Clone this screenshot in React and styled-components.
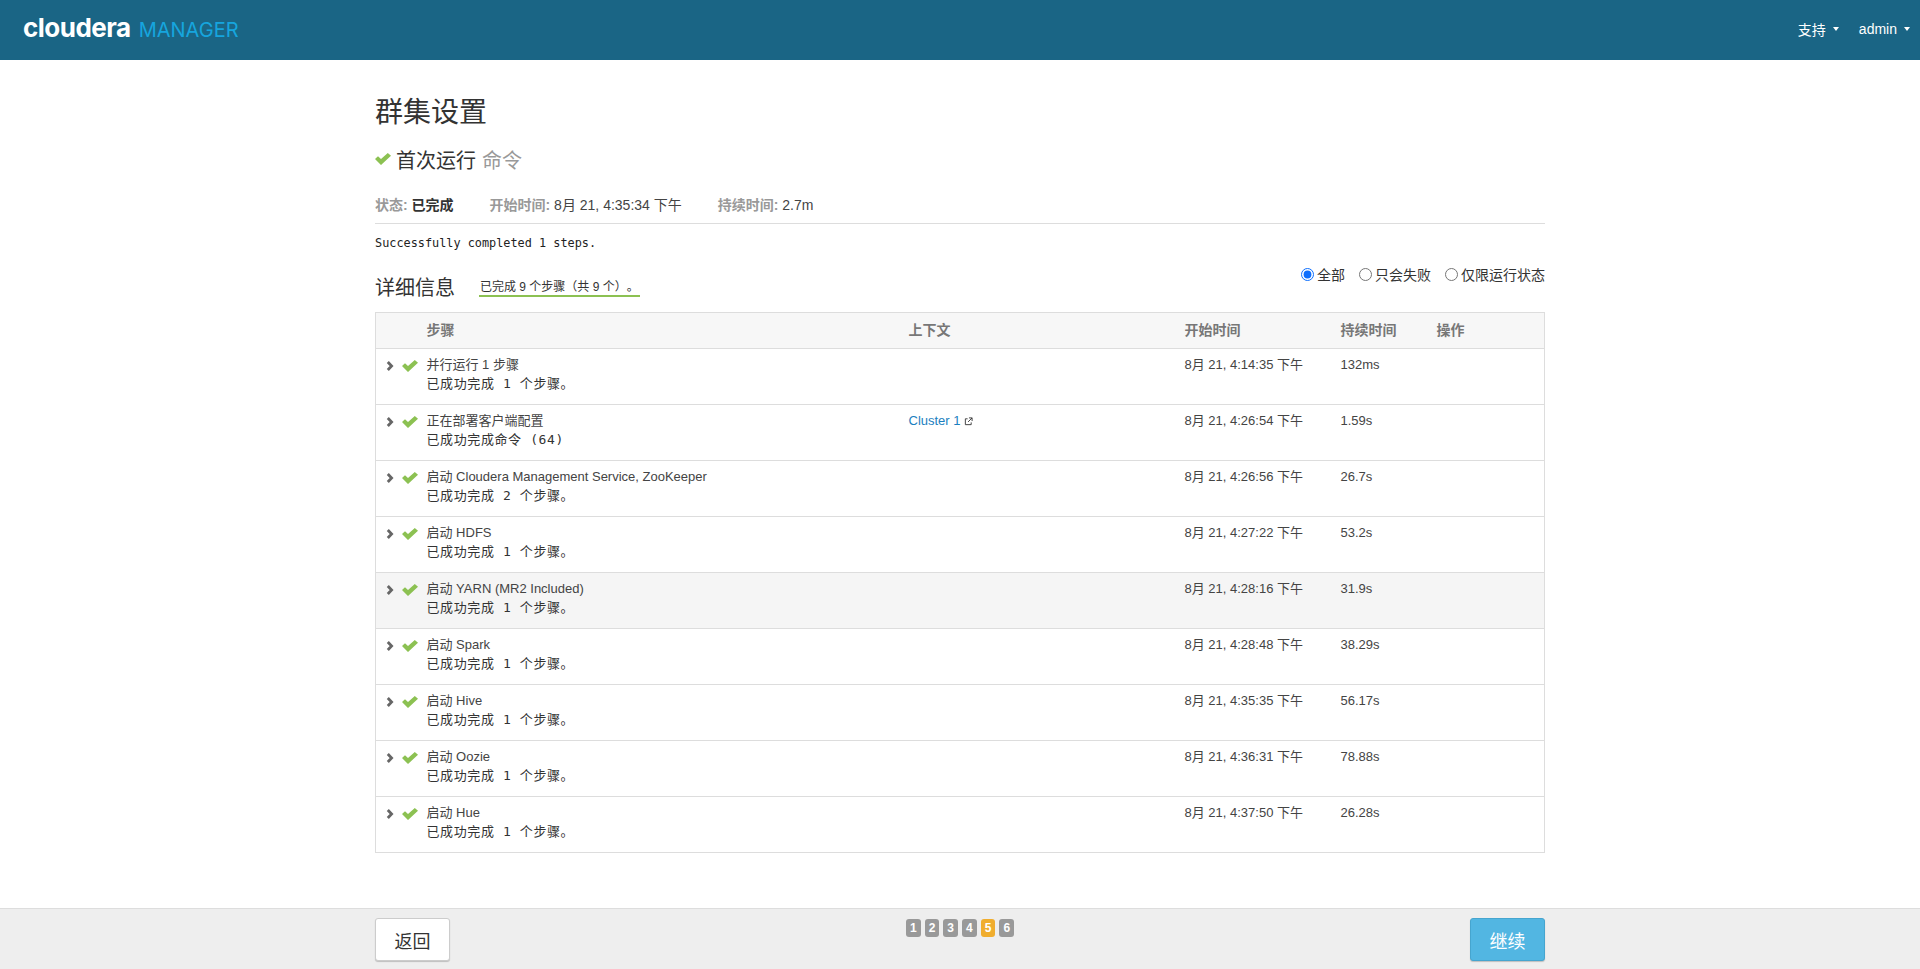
import React from 'react';
import styled, { createGlobalStyle } from 'styled-components';

const CJK = '"Liberation Sans", "Noto Sans CJK SC", sans-serif';
const MONO = '"DejaVu Sans Mono", "Noto Sans CJK SC", monospace';

const GlobalStyle = createGlobalStyle`
  html, body {
    margin: 0;
    padding: 0;
    background: #fff;
    font-family: ${CJK};
    font-size: 13px;
    color: #333;
    text-spacing-trim: space-all;
  }
  * { box-sizing: border-box; }
`;

const Page = styled.div`
  height: 969px;
  display: flex;
  flex-direction: column;
  overflow: hidden;
`;

const Navbar = styled.div`
  height: 60px;
  flex: none;
  background: #1a6585;
  display: flex;
  align-items: center;
  justify-content: space-between;
  padding: 0 10px 0 23px;
`;

const Logo = styled.div`
  display: flex;
  align-items: baseline;
  margin-top: -6px;
`;

const LogoMain = styled.span`
  font-family: Inter, sans-serif;
  font-weight: 700;
  font-size: 26px;
  letter-spacing: -0.5px;
  color: #fff;
`;

const LogoSub = styled.span`
  font-family: Inter, sans-serif;
  font-size: 20px;
  color: #16a5de;
  margin-left: 8px;
`;

const NavMenu = styled.div`
  display: flex;
  gap: 20px;
  margin-top: -3px;
`;

const NavItem = styled.span`
  display: flex;
  align-items: center;
  gap: 7px;
  font-size: 14px;
  color: #fff;
`;

const Caret = styled.i`
  width: 0;
  height: 0;
  border-left: 3.5px solid transparent;
  border-right: 3.5px solid transparent;
  border-top: 4px solid #fff;
`;

const Main = styled.div`
  flex: 1;
  width: 1170px;
  margin: 0 auto;
`;

const Title = styled.h1`
  margin: 0;
  padding-top: 35px;
  height: 75px;
  font-size: 28px;
  line-height: 36px;
  font-weight: 400;
  color: #333;
`;

const Subtitle = styled.div`
  display: flex;
  align-items: center;
  height: 48px;
  font-size: 20px;
  color: #333;
`;

const SubtitleCheck = styled.svg`
  width: 16px;
  height: 12px;
  margin-right: 5px;
`;

const Muted = styled.span`
  color: #999;
  margin-left: 6px;
`;

const StatusRow = styled.div`
  display: flex;
  gap: 36px;
  align-items: center;
  height: 41px;
  padding-top: 1px;
  font-size: 14px;
  border-bottom: 1px solid #ddd;
  color: #444;
`;

const StatusLabel = styled.b`
  color: #999;
  font-weight: 700;
`;

const StatusValue = styled.b`
  color: #333;
`;

const Message = styled.div`
  font-family: ${MONO};
  font-size: 11.85px;
  line-height: 18px;
  padding-top: 10px;
  color: #222;
`;

const DetailBar = styled.div`
  display: flex;
  align-items: flex-start;
  justify-content: space-between;
  height: 60px;
  padding-top: 8px;
`;

const DetailLeft = styled.div`
  display: flex;
  align-items: flex-start;
`;

const DetailTitle = styled.div`
  font-size: 20px;
  line-height: 28px;
  margin-top: 14px;
  color: #333;
`;

const Progress = styled.div`
  margin: 15px 0 0 24px;
  padding: 4px 1px 0 1px;
  width: 161px;
  height: 22px;
  font-size: 12px;
  line-height: 16px;
  border-bottom: 2px solid #8cc152;
  white-space: nowrap;
`;

const Filters = styled.div`
  display: flex;
  gap: 14px;
  font-size: 14px;
  color: #333;
  margin-top: 4px;
`;

const FilterLabel = styled.label`
  display: flex;
  align-items: center;
  gap: 3px;
`;

const Radio = styled.input`
  margin: 0;
  width: 13px;
  height: 13px;
  accent-color: #0d6efd;
`;

const StepsTable = styled.table`
  width: 100%;
  border-collapse: collapse;
  table-layout: fixed;
  border: 1px solid #ddd;
`;

const HeadCell = styled.th`
  height: 36px;
  text-align: left;
  background: #f7f7f7;
  border-bottom: 1px solid #ddd;
  font-size: 14px;
  font-weight: 700;
  color: #777;
  padding: 0 0 3px;
  width: ${(p) => p.$w}px;
`;

const Row = styled.tr`
  height: 56px;
  background: ${(p) => (p.$hover ? '#f5f5f5' : '#fff')};
  border-bottom: 1px solid #ddd;
`;

const Cell = styled.td`
  vertical-align: top;
  padding: 7px 0 0;
  font-size: 13px;
  line-height: 18px;
  color: #444;
`;

const IconCell = styled(Cell)`
  padding: 8px 0 0 10px;
`;

const Icons = styled.div`
  display: flex;
  align-items: center;
  gap: 8px;
  height: 18px;
`;

const IconSvg = styled.svg`
  display: block;
  flex: none;
`;

const StepName = styled.div`
  color: #444;
`;

const StepMessage = styled.div`
  font-family: ${MONO};
  font-size: 13px;
  letter-spacing: 0.6px;
  line-height: 20px;
  color: #333;
`;

const StepLink = styled.a`
  display: inline-flex;
  align-items: center;
  gap: 3px;
  color: #1b80c0;
  text-decoration: none;
`;

const Footer = styled.div`
  height: 61px;
  flex: none;
  background: #eee;
  border-top: 1px solid #ddd;
`;

const FooterInner = styled.div`
  width: 1170px;
  height: 100%;
  margin: 0 auto;
  display: flex;
  justify-content: space-between;
  padding-top: 9px;
`;

const Button = styled.button`
  width: 75px;
  height: 43px;
  font-family: ${CJK};
  font-size: 18px;
  border-radius: 3px;
  border: 1px solid ${(p) => (p.$primary ? '#46a5cf' : '#ccc')};
  background: ${(p) => (p.$primary ? '#52b6e2' : '#fff')};
  color: ${(p) => (p.$primary ? '#fff' : '#333')};
  box-shadow: 0 1px 1px rgba(0, 0, 0, 0.2);
`;

const Pager = styled.div`
  display: flex;
  gap: 4px;
  padding-top: 1px;
  height: 20px;
`;

const PageBadge = styled.span`
  padding: 0 4px;
  height: 18px;
  border-radius: 3px;
  background: ${(p) => (p.$active ? '#f0ad2e' : '#999')};
  color: #fff;
  font-size: 12px;
  font-weight: 700;
  line-height: 18px;
  text-align: center;
`;

const steps = [
  { name: '并行运行 1 步骤', msg: '已成功完成 1 个步骤。', start: '8月 21, 4:14:35 下午', dur: '132ms' },
  { name: '正在部署客户端配置', msg: '已成功完成命令 (64)', start: '8月 21, 4:26:54 下午', dur: '1.59s', link: 'Cluster 1' },
  { name: '启动 Cloudera Management Service, ZooKeeper', msg: '已成功完成 2 个步骤。', start: '8月 21, 4:26:56 下午', dur: '26.7s' },
  { name: '启动 HDFS', msg: '已成功完成 1 个步骤。', start: '8月 21, 4:27:22 下午', dur: '53.2s' },
  { name: '启动 YARN (MR2 Included)', msg: '已成功完成 1 个步骤。', start: '8月 21, 4:28:16 下午', dur: '31.9s', hover: true },
  { name: '启动 Spark', msg: '已成功完成 1 个步骤。', start: '8月 21, 4:28:48 下午', dur: '38.29s' },
  { name: '启动 Hive', msg: '已成功完成 1 个步骤。', start: '8月 21, 4:35:35 下午', dur: '56.17s' },
  { name: '启动 Oozie', msg: '已成功完成 1 个步骤。', start: '8月 21, 4:36:31 下午', dur: '78.88s' },
  { name: '启动 Hue', msg: '已成功完成 1 个步骤。', start: '8月 21, 4:37:50 下午', dur: '26.28s' },
];

const CHECK_PATH = 'M0 6 3 3.2 6 6 12.8 0 16 2.8 6 12Z';

const ArrowIcon = () => (
  <IconSvg width="8" height="10" viewBox="0 0 8 10" fill="none" stroke="#666" strokeWidth="2.8">
    <path d="M1.8 1 5.6 5 1.8 9" />
  </IconSvg>
);

const CheckIcon = () => (
  <IconSvg width="16" height="12" viewBox="0 0 16 12" fill="#8cc152">
    <path d={CHECK_PATH} />
  </IconSvg>
);

const ExternalIcon = () => (
  <svg width="9" height="9" viewBox="0 0 10 10" fill="none" stroke="#333" strokeWidth="1">
    <path d="M4 2H1.5v6.5H8V6" />
    <path d="M5.5 1h3.5v3.5M9 1 4.5 5.5" />
  </svg>
);

const App = () => (
  <Page>
    <GlobalStyle />
    <Navbar>
      <Logo>
        <LogoMain>cloudera</LogoMain>
        <LogoSub>MANAGER</LogoSub>
      </Logo>
      <NavMenu>
        <NavItem>支持 <Caret /></NavItem>
        <NavItem>admin <Caret /></NavItem>
      </NavMenu>
    </Navbar>
    <Main>
      <Title>群集设置</Title>
      <Subtitle>
        <SubtitleCheck viewBox="0 0 16 12" fill="#8cc152"><path d={CHECK_PATH} /></SubtitleCheck>
        首次运行<Muted>命令</Muted>
      </Subtitle>
      <StatusRow>
        <span><StatusLabel>状态:</StatusLabel> <StatusValue>已完成</StatusValue></span>
        <span><StatusLabel>开始时间:</StatusLabel> 8月 21, 4:35:34 下午</span>
        <span><StatusLabel>持续时间:</StatusLabel> 2.7m</span>
      </StatusRow>
      <Message>Successfully completed 1 steps.</Message>
      <DetailBar>
        <DetailLeft>
          <DetailTitle>详细信息</DetailTitle>
          <Progress>已完成 9 个步骤（共 9 个）。</Progress>
        </DetailLeft>
        <Filters>
          <FilterLabel><Radio type="radio" name="f" defaultChecked />全部</FilterLabel>
          <FilterLabel><Radio type="radio" name="f" />只会失败</FilterLabel>
          <FilterLabel><Radio type="radio" name="f" />仅限运行状态</FilterLabel>
        </Filters>
      </DetailBar>
      <StepsTable>
        <thead>
          <tr>
            <HeadCell $w={51} />
            <HeadCell $w={482}>步骤</HeadCell>
            <HeadCell $w={276}>上下文</HeadCell>
            <HeadCell $w={156}>开始时间</HeadCell>
            <HeadCell $w={96}>持续时间</HeadCell>
            <HeadCell>操作</HeadCell>
          </tr>
        </thead>
        <tbody>
          {steps.map((s) => (
            <Row key={s.name} $hover={s.hover}>
              <IconCell>
                <Icons><ArrowIcon /><CheckIcon /></Icons>
              </IconCell>
              <Cell>
                <StepName>{s.name}</StepName>
                <StepMessage>{s.msg}</StepMessage>
              </Cell>
              <Cell>
                {s.link && <StepLink href="#">{s.link} <ExternalIcon /></StepLink>}
              </Cell>
              <Cell>{s.start}</Cell>
              <Cell>{s.dur}</Cell>
              <Cell />
            </Row>
          ))}
        </tbody>
      </StepsTable>
    </Main>
    <Footer>
      <FooterInner>
        <Button>返回</Button>
        <Pager>
          {[1, 2, 3, 4, 5, 6].map((n) => (
            <PageBadge key={n} $active={n === 5}>{n}</PageBadge>
          ))}
        </Pager>
        <Button $primary>继续</Button>
      </FooterInner>
    </Footer>
  </Page>
);

export default App;
